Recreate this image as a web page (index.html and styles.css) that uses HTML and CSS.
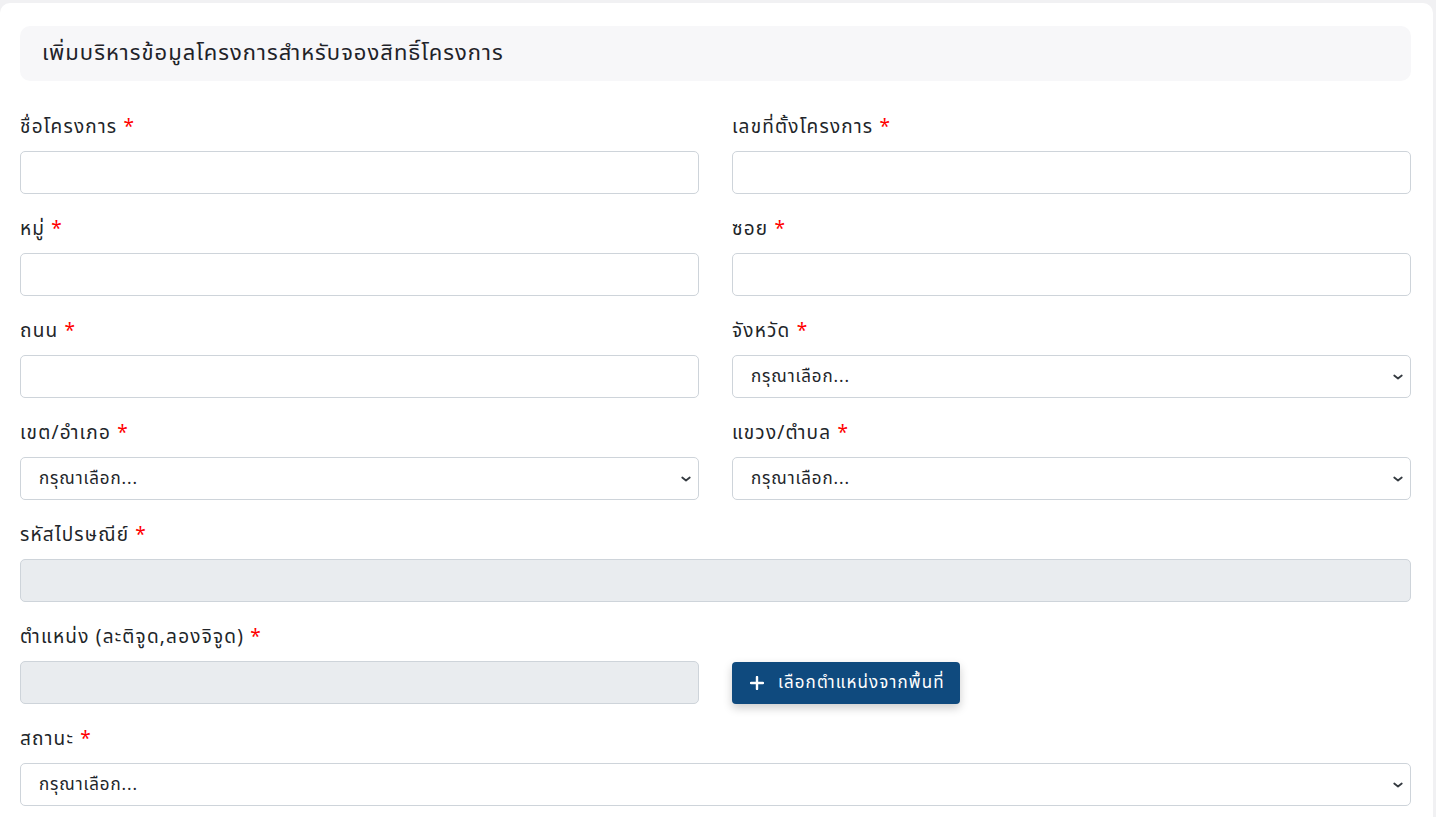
FILE: index.html
```html
<!DOCTYPE html>
<html lang="th">
<head>
<meta charset="utf-8">
<title>เพิ่มบริหารข้อมูลโครงการ</title>
<link rel="stylesheet" href="styles.css">
</head>
<body>
<div class="card">
  <div class="card-header">เพิ่มบริหารข้อมูลโครงการสำหรับจองสิทธิ์โครงการ</div>
  <form class="form-grid">
    <div class="field">
      <label class="label">ชื่อโครงการ <span class="req">*</span></label>
      <input class="control" type="text">
    </div>
    <div class="field">
      <label class="label">เลขที่ตั้งโครงการ <span class="req">*</span></label>
      <input class="control" type="text">
    </div>
    <div class="field">
      <label class="label">หมู่ <span class="req">*</span></label>
      <input class="control" type="text">
    </div>
    <div class="field">
      <label class="label">ซอย <span class="req">*</span></label>
      <input class="control" type="text">
    </div>
    <div class="field">
      <label class="label">ถนน <span class="req">*</span></label>
      <input class="control" type="text">
    </div>
    <div class="field">
      <label class="label">จังหวัด <span class="req">*</span></label>
      <select class="control select"><option>กรุณาเลือก...</option></select>
    </div>
    <div class="field">
      <label class="label">เขต/อำเภอ <span class="req">*</span></label>
      <select class="control select"><option>กรุณาเลือก...</option></select>
    </div>
    <div class="field">
      <label class="label">แขวง/ตำบล <span class="req">*</span></label>
      <select class="control select"><option>กรุณาเลือก...</option></select>
    </div>
    <div class="field full">
      <label class="label">รหัสไปรษณีย์ <span class="req">*</span></label>
      <input class="control" type="text" disabled>
    </div>
    <div class="field">
      <label class="label">ตำแหน่ง (ละติจูด,ลองจิจูด) <span class="req">*</span></label>
      <input class="control" type="text" disabled>
    </div>
    <div class="field action">
      <button class="btn" type="button">
        <svg class="plus" width="14" height="14" viewBox="0 0 14 14"><path d="M7 1v12M1 7h12" stroke="#fff" stroke-width="2.4" stroke-linecap="round"/></svg>
        <span>เลือกตำแหน่งจากพื้นที่</span>
      </button>
    </div>
    <div class="field full">
      <label class="label">สถานะ <span class="req">*</span></label>
      <select class="control select"><option>กรุณาเลือก...</option></select>
    </div>
  </form>
</div>
</body>
</html>
```

FILE: styles.css
```css
html, body {
  margin: 0;
  padding: 0;
}
body {
  background: #f1f1f3;
  font-family: "Noto Sans Thai", "Noto Sans Thai UI", "Noto Sans", sans-serif;
  color: #212529;
  height: 817px;
  overflow: hidden;
}
.card {
  background: #ffffff;
  margin: 3px 3px 0 0;
  border-radius: 10px;
  padding: 23px 22px 40px 20px;
  min-height: 800px;
  box-sizing: border-box;
}
.card-header {
  background: #f7f7f9;
  border-radius: 10px;
  height: 55px;
  display: flex;
  align-items: center;
  padding: 0 22px;
  font-size: 22px;
  letter-spacing: 1px;
  color: #1f2329;
  margin-bottom: 32px;
}
.form-grid {
  display: grid;
  grid-template-columns: 1fr 1fr;
  column-gap: 33px;
  row-gap: 21px;
}
.field {
  display: flex;
  flex-direction: column;
}
.field.full {
  grid-column: 1 / span 2;
}
.field.action {
  justify-content: flex-end;
}
.label {
  font-size: 19px;
  letter-spacing: 1.2px;
  line-height: 29px;
  height: 29px;
  margin-bottom: 9px;
  color: #212529;
}
.req {
  color: #ff0000;
  letter-spacing: 0;
}
.control {
  box-sizing: border-box;
  height: 43px;
  width: 100%;
  border: 1px solid #ced4da;
  border-radius: 5px;
  background: #ffffff;
  font-family: inherit;
  font-size: 17px;
  letter-spacing: 0.9px;
  color: #212529;
  padding: 0 18px;
  margin: 0;
  outline: none;
}
.control:disabled {
  background: #e9ecef;
}
.select {
  appearance: none;
  -webkit-appearance: none;
  background-image: url("data:image/svg+xml,%3Csvg xmlns='http://www.w3.org/2000/svg' viewBox='0 0 16 16'%3E%3Cpath fill='none' stroke='%23343a40' stroke-linecap='round' stroke-linejoin='round' stroke-width='2.4' d='M3 6l5 4 5-4'/%3E%3C/svg%3E");
  background-repeat: no-repeat;
  background-position: right 5px center;
  background-size: 14px 12px;
}
.btn {
  align-self: flex-start;
  height: 42px;
  display: inline-flex;
  align-items: center;
  gap: 14px;
  padding: 0 15px 0 18px;
  background: #0f4a7e;
  color: #ffffff;
  border: none;
  border-radius: 4px;
  font-family: inherit;
  font-size: 17px;
  letter-spacing: 1.1px;
  box-shadow: 0 4px 10px rgba(0, 0, 0, 0.2);
  cursor: pointer;
}
.plus {
  display: block;
}
```
